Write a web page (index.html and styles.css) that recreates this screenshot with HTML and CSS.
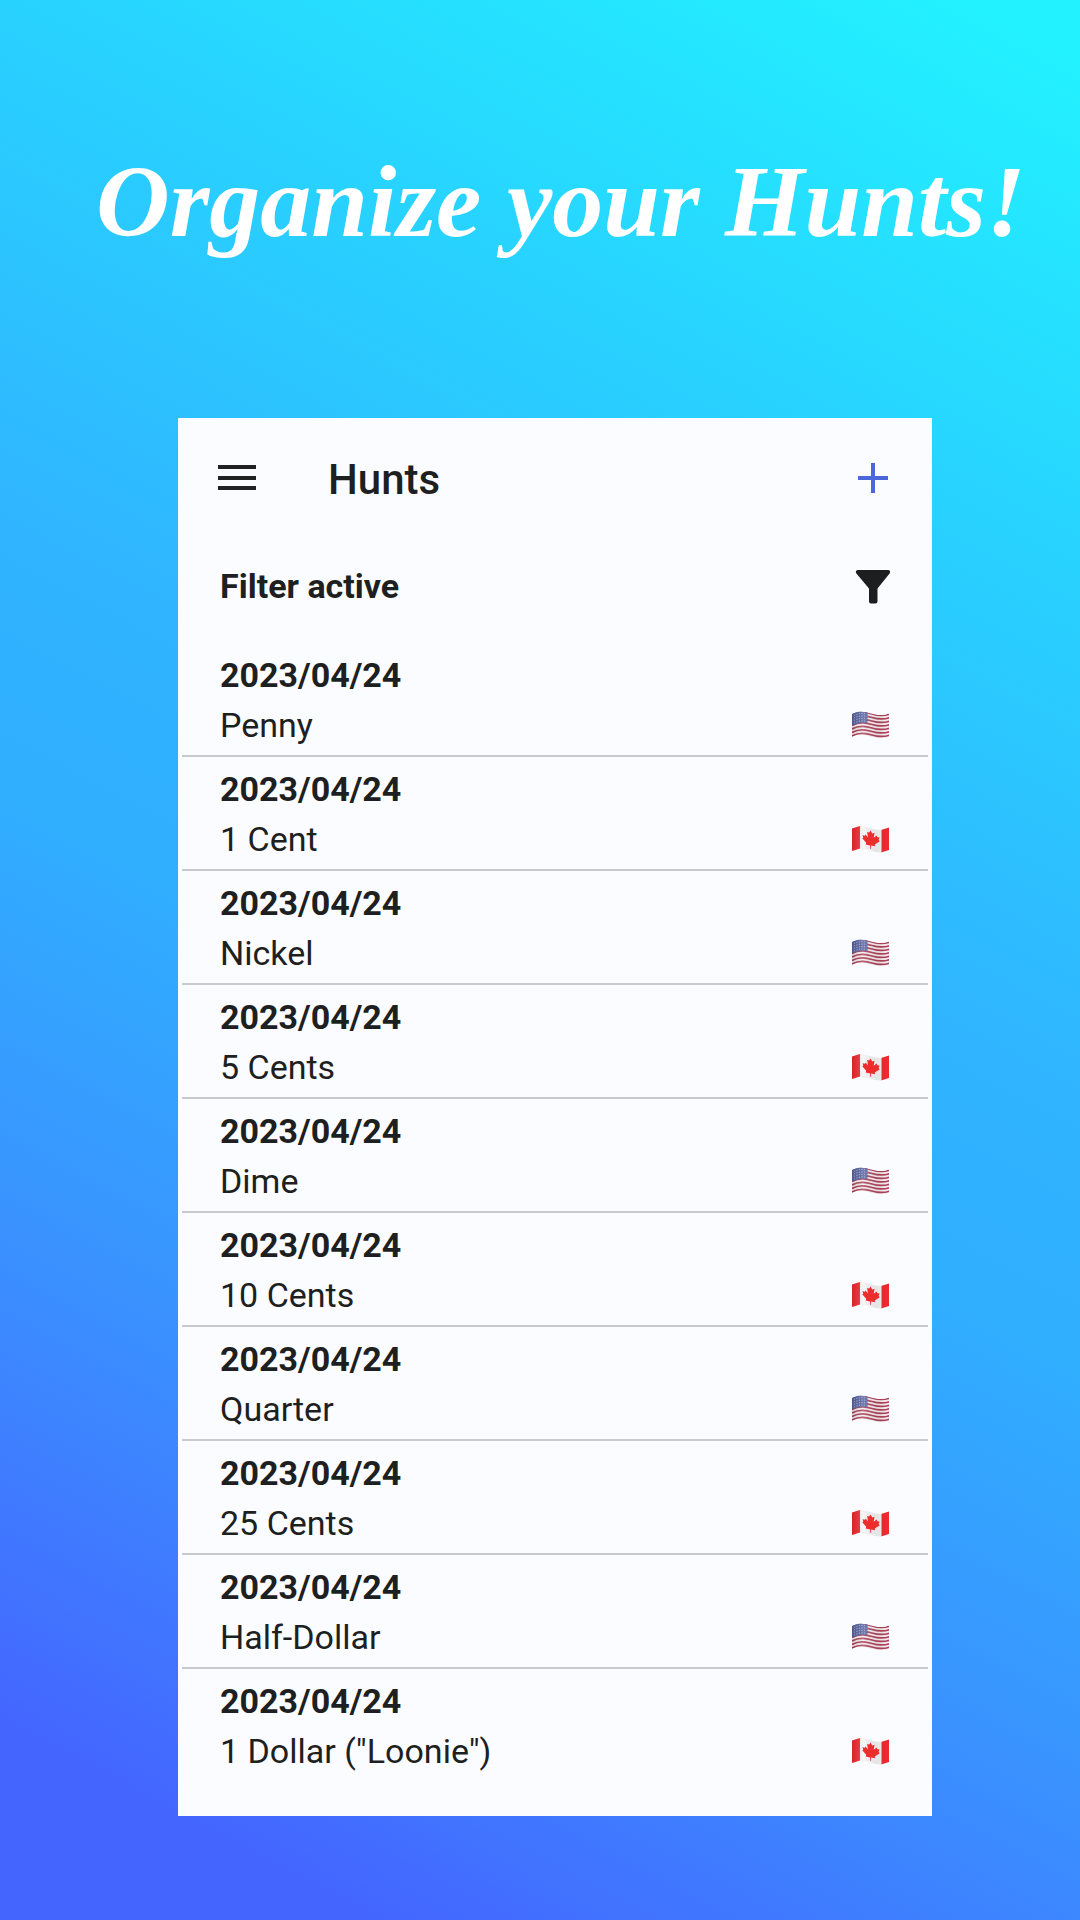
FILE: index.html
```html
<!DOCTYPE html>
<html lang="en">
<head>
<meta charset="utf-8">
<meta name="viewport" content="width=device-width, initial-scale=1">
<title>Hunts</title>
<link rel="stylesheet" href="styles.css">
</head>
<body>
<svg class="sprite" width="0" height="0" aria-hidden="true">
  <defs>
    <linearGradient id="shade" x1="0" x2="1" y1="0" y2="0">
      <stop offset="0" stop-color="#000" stop-opacity=".12"/>
      <stop offset=".3" stop-color="#fff" stop-opacity=".15"/>
      <stop offset=".7" stop-color="#000" stop-opacity=".06"/>
      <stop offset="1" stop-color="#000" stop-opacity="0"/>
    </linearGradient>
    <symbol id="flag-us" viewBox="0 0 38 28">
      <clipPath id="us-clip"><path d="M0 3C7-1 14 1 19 2.500S30 5 37 2.500V25.500C30 28 24 27 19 25.500S7 22 0 26Z"/></clipPath>
      <g clip-path="url(#us-clip)">
        <path fill="#f6eef1" d="M0 0h38v28H0z"/>
        <g fill="none" stroke="#b0435a" stroke-width="1.700">
          <path d="M0 4C8-.5 15 1.500 20 3S31 5.500 38 3"/>
          <path d="M0 7.500C8 3 15 5 20 6.500S31 9 38 6.500"/>
          <path d="M0 11C8 6.500 15 8.500 20 10S31 12.500 38 10"/>
          <path d="M0 14.500C8 10 15 12 20 13.500S31 16 38 13.500"/>
          <path d="M0 18C8 13.500 15 15.500 20 17S31 19.500 38 17"/>
          <path d="M0 21.500C8 17 15 19 20 20.500S31 23 38 20.500"/>
          <path d="M0 25C8 20.500 15 22.500 20 24S31 26.500 38 24"/>
        </g>
        <path fill="#5964a4" d="M0 0h15.500v12.300C11 11 6 11.500 0 14.500Z"/>
        <path fill="none" stroke="#c3c8e2" stroke-width="1" stroke-dasharray="1 1.600" d="M2 4.500Q8 1.500 15 3M2 7Q8 4 15 5.500M2 9.500Q8 6.500 15 8M2 12Q8 9 15 10.500"/>
        <path fill="url(#shade)" d="M0 0h38v28H0z"/>
      </g>
    </symbol>
    <symbol id="flag-ca" viewBox="0 0 38 28">
      <clipPath id="ca-clip"><path d="M0 3.500L8 1C14 1 22 5 29 5L37 2.500V25L29 27.500C22 27.500 14 23.500 8 23.500L0 26Z"/></clipPath>
      <g clip-path="url(#ca-clip)">
        <path fill="#f5f5f6" d="M0 0h38v28H0z"/>
        <path fill="#f22a30" d="M0 0h8v28H0zM29.500 0H38v28h-8.500z"/>
        <path fill="url(#shade)" d="M0 0h38v28H0z"/>
        <path fill="#ed2c2c" d="M18.500 5.500l1.800 3 2.200-.8-.8 5 3-2.200.6 1.800 2.300.3-1 2.500 1.200 1.200-5 3.200.3 1.700-4-.6v3.200h-.9v-3.400l-4.500-1 .5-1.700-4-4.400 1.100-.5-.8-2.500 2.500.5.6-1.200 2.500 3-1-5.700 2 .7z"/>
      </g>
    </symbol>
  </defs>
</svg>

<main class="promo">
  <h1 class="headline">Organize your Hunts!</h1>

  <section class="screen" aria-labelledby="screen-title">
    <header class="app-bar">
      <button class="icon-button" type="button" aria-label="Open menu">
        <svg class="icon" viewBox="0 0 38 38"><path fill="#202123" d="M0 6h38v4H0zM0 17h38v4H0zM0 27h38v4H0z"/></svg>
      </button>
      <h2 class="title" id="screen-title">Hunts</h2>
      <button class="icon-button" type="button" aria-label="Add hunt">
        <svg class="icon" viewBox="0 0 38 38"><path fill="#4a67db" d="M17 4h4v13h13v4H21v13h-4V21H4v-4h13z"/></svg>
      </button>
    </header>

    <div class="filter-bar">
      <span class="filter-label">Filter active</span>
      <button class="icon-button" type="button" aria-label="Edit filter">
        <svg class="icon" viewBox="0 0 38 38"><path fill="#1d1e20" d="M4 3h30c2 0 2.800 2 1.600 3.600L23.500 21.500V34.500Q23.500 36.500 21.500 36.500H17Q15 36.500 15 34.500V21.500L2.400 6.600C1.200 5 2 3 4 3Z"/></svg>
      </button>
    </div>

    <ul class="hunts">
      <li class="hunt"><time class="date" datetime="2023-04-24">2023/04/24</time><span class="coin">Penny</span><svg class="flag" role="img" aria-label="United States"><use href="#flag-us"/></svg></li>
      <li class="hunt"><time class="date" datetime="2023-04-24">2023/04/24</time><span class="coin">1 Cent</span><svg class="flag" role="img" aria-label="Canada"><use href="#flag-ca"/></svg></li>
      <li class="hunt"><time class="date" datetime="2023-04-24">2023/04/24</time><span class="coin">Nickel</span><svg class="flag" role="img" aria-label="United States"><use href="#flag-us"/></svg></li>
      <li class="hunt"><time class="date" datetime="2023-04-24">2023/04/24</time><span class="coin">5 Cents</span><svg class="flag" role="img" aria-label="Canada"><use href="#flag-ca"/></svg></li>
      <li class="hunt"><time class="date" datetime="2023-04-24">2023/04/24</time><span class="coin">Dime</span><svg class="flag" role="img" aria-label="United States"><use href="#flag-us"/></svg></li>
      <li class="hunt"><time class="date" datetime="2023-04-24">2023/04/24</time><span class="coin">10 Cents</span><svg class="flag" role="img" aria-label="Canada"><use href="#flag-ca"/></svg></li>
      <li class="hunt"><time class="date" datetime="2023-04-24">2023/04/24</time><span class="coin">Quarter</span><svg class="flag" role="img" aria-label="United States"><use href="#flag-us"/></svg></li>
      <li class="hunt"><time class="date" datetime="2023-04-24">2023/04/24</time><span class="coin">25 Cents</span><svg class="flag" role="img" aria-label="Canada"><use href="#flag-ca"/></svg></li>
      <li class="hunt"><time class="date" datetime="2023-04-24">2023/04/24</time><span class="coin">Half-Dollar</span><svg class="flag" role="img" aria-label="United States"><use href="#flag-us"/></svg></li>
      <li class="hunt"><time class="date" datetime="2023-04-24">2023/04/24</time><span class="coin">1 Dollar ("Loonie")</span><svg class="flag" role="img" aria-label="Canada"><use href="#flag-ca"/></svg></li>
    </ul>
  </section>
</main>
</body>
</html>
```
FILE: styles.css
```css
* {
  box-sizing: border-box;
}

body {
  margin: 0;
  font-family: Roboto, "Liberation Sans", sans-serif;
  color: #1e1f21;
}

.sprite {
  position: absolute;
}

.promo {
  min-height: 100vh;
  padding: 122px 148px 102px 178px;
  background: linear-gradient(28deg, #4466ff 8%, #3a92ff 28%, #30aeff 45%, #30b4ff 56%, #28d2ff 77%, #22f2ff 98%);
}

/* The headline runs wider than the screen below it. */
.headline {
  margin: 0 -140px 136px -82px;
  font: italic bold 102px/160px "Brush Script MT", "Liberation Serif", serif;
  color: #fff;
  white-space: nowrap;
}

.screen {
  padding-bottom: 36px;
  background: #fbfcff;
}

.app-bar,
.filter-bar {
  display: flex;
  align-items: center;
  justify-content: space-between;
  padding: 0 40px;
}

.app-bar {
  height: 120px;
}

.filter-bar {
  height: 96px;
  padding-left: 42px;
}

.icon-button {
  padding: 0;
  border: 0;
  background: none;
}

.icon {
  display: block;
  width: 38px;
  height: 38px;
}

.title {
  flex: 1;
  margin: 0;
  padding: 4px 0 0 72px;
  font-size: 42px;
  line-height: 48px;
  font-weight: 500;
}

.filter-label {
  font-size: 34px;
  line-height: 50px;
  font-weight: 700;
}

.hunts {
  margin: 9px 4px 0;
  padding: 0;
  list-style: none;
}

.hunt {
  display: grid;
  grid-template-columns: 1fr auto;
  align-items: center;
  padding: 7px 38px 5px;
  border-bottom: 2px solid #c8cacd;
  font-size: 34px;
  line-height: 50px;
}

.hunt:last-child {
  padding-bottom: 4px;
  border-bottom: 0;
}

.date {
  grid-column: 1 / -1;
  font-weight: 700;
}

.flag {
  width: 38px;
  height: 28px;
}
```
